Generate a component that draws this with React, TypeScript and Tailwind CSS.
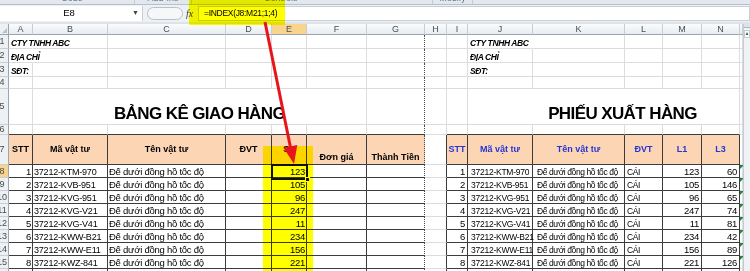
import type { ReactNode } from "react";

const items: [string, number, number][] = [
  ["37212-KTM-970", 123, 60],
  ["37212-KVB-951", 105, 146],
  ["37212-KVG-951", 96, 65],
  ["37212-KVG-V21", 247, 74],
  ["37212-KVG-V41", 11, 81],
  ["37212-KWW-B21", 234, 42],
  ["37212-KWW-E11", 156, 89],
  ["37212-KWZ-841", 221, 126],
];

const letters = ["A", "B", "C", "D", "E", "F", "G", "H", "I", "J", "K", "L", "M", "N", ""];
const NAME = "Đế dưới đồng hồ tốc độ";

// bảng trái A..G, bảng phải I..N, từ dòng 7
function inTable(r: number, c: number) {
  if (r < 7 || r > 16) return false;
  return (c >= 0 && c <= 6) || (c >= 8 && c <= 13);
}

function borders(r: number, c: number, last: number, noRight: boolean) {
  let right = "border-r-[#dadcdd]";
  if (last === 6) right = "border-r-[#4a4a4a] [border-right-style:dotted]";
  else if (noRight) right = "border-r-transparent";
  else if (inTable(r, last) || inTable(r, last + 1)) right = "border-r-[#3c3c3c]";
  const bottom = inTable(r, c) || inTable(r + 1, c) ? "border-b-[#3c3c3c]" : "border-b-[#dadcdd]";
  return `border-r border-b ${right} ${bottom}`;
}

type CellProps = {
  r: number;
  c: number;
  span?: number;
  noRight?: boolean;
  className?: string;
  children?: ReactNode;
};

const Cell = ({ r, c, span = 1, noRight = false, className = "", children }: CellProps) => (
  <div
    className={`${borders(r, c, c + span - 1, noRight)} ${span === 5 ? "col-span-5" : ""} flex min-w-0 whitespace-nowrap ${className}`}
  >
    {children}
  </div>
);

const RowHead = ({ r }: { r: number }) => (
  <div
    className={`flex items-center justify-end overflow-hidden border-r border-b border-r-[#9aa5b2] border-b-[#c9ced5] ${
      r === 8 ? "bg-[#f8d48c]" : "bg-[#eef1f4]"
    }`}
  >
    <div className="w-[12px] shrink-0 text-center text-[9px] leading-none text-[#4a4a4a]">{r}</div>
  </div>
);

const headL = "items-center justify-center text-[9px] font-bold bg-[#fcd5b4]";
const headLBottom = "items-end justify-center pb-[1px] text-[9px] leading-[11px] font-bold bg-[#fcd5b4]";
const headR = "items-center justify-center text-[9px] font-bold text-[#2336d8] bg-[#fcd5b4]";
const dataL = "items-end text-[9.5px] leading-[10px] tracking-[-0.25px]";
const code = "items-end text-[9px] leading-[10px] tracking-[-0.2px]";
const codeR = "items-end text-[8.5px] leading-[10px] tracking-[-0.25px]";
const dataR = "items-end text-[8.5px] leading-[10px] tracking-[-0.4px]";

function content(r: number, c: number): Omit<CellProps, "r" | "c"> {
  if (r >= 1 && r <= 3 && (c === 0 || c === 9)) {
    const txt = ["CTY TNHH ABC", "ĐỊA CHỈ", "SĐT:"][r - 1];
    return {
      noRight: r < 3 && (c === 0 || r === 1),
      className: "items-end pl-[2px] text-[8.5px] leading-[9px] font-bold italic tracking-[-0.4px]",
      children: txt,
    };
  }
  if (r === 7) {
    const left = ["STT", "Mã vật tư", "Tên vật tư", "ĐVT", "SL"];
    if (c <= 4) return { className: headL, children: left[c] };
    if (c === 5) return { className: headLBottom, children: "Đơn giá" };
    if (c === 6) return { className: headLBottom, children: "Thành Tiền" };
    const right = ["STT", "Mã vật tư", "Tên vật tư", "ĐVT", "L1", "L3"];
    if (c >= 8 && c <= 13) return { className: headR, children: right[c - 8] };
    return {};
  }
  if (r >= 8 && r <= 15) {
    const i = r - 8;
    const [ma, l1, l3] = items[i];
    switch (c) {
      case 0:
        return { className: `${dataL} justify-end pr-[1px]`, children: i + 1 };
      case 1:
        return { className: `${code} pl-[1px]`, children: ma };
      case 2:
        return { className: `${dataL} pl-[1px]`, children: NAME };
      case 4:
        return { className: `${dataL} justify-end pr-[1px]`, children: l1 };
      case 8:
        return { className: `${dataL} justify-end pr-[2px]`, children: i + 1 };
      case 9:
        return { className: `${codeR} pl-[3px]`, children: ma };
      case 10:
        return { className: `${dataR} pl-[4px]`, children: NAME };
      case 11:
        return { className: `${dataR} pl-[2px]`, children: "CÁI" };
      case 12:
        return { className: `${dataL} justify-end pr-[2px]`, children: l1 };
      case 13:
        return { className: `${dataL} justify-end pr-[2px]`, children: l3 };
      case 14:
        return {
          className: "items-start",
          children: <div className="h-0 w-0 border-t-[4px] border-r-[4px] border-t-[#1f8a34] border-r-transparent" />,
        };
    }
  }
  return {};
}

function rowCells(r: number): ReactNode[] {
  const out: ReactNode[] = [<RowHead key="rh" r={r} />];
  if (r === 5) {
    out.push(
      <Cell key="a" r={5} c={0} />,
      <Cell key="bf" r={5} c={1} span={5} className="items-end justify-center pb-[2px]">
        <span className="text-[17px] leading-[17px] font-bold tracking-[-0.6px]">BẢNG KÊ GIAO HÀNG</span>
      </Cell>,
      <Cell key="g" r={5} c={6} />,
      <Cell key="h" r={5} c={7} />,
      <Cell key="i" r={5} c={8} />,
      <Cell key="jn" r={5} c={9} span={5} className="items-end justify-center pl-[38px] pb-[2px]">
        <span className="text-[17px] leading-[17px] font-bold tracking-[-0.6px]">PHIẾU XUẤT HÀNG</span>
      </Cell>,
      <Cell key="o" r={5} c={14} />
    );
    return out;
  }
  for (let c = 0; c < 15; c++) out.push(<Cell key={c} r={r} c={c} {...content(r, c)} />);
  return out;
}

const Ribbon = () => (
  <div className="flex h-[5px] overflow-hidden border-b border-[#b6c0cc] bg-[#e3e8ee] text-[9px] leading-[11px] text-[#6b7684]">
    <div className="flex w-[135px] justify-center border-r border-[#c3ccd6] pl-[10px]"><span className="-mt-[7px]">Code</span></div>
    <div className="flex w-[57px] justify-center border-r border-[#c3ccd6]"><span className="-mt-[7px]">Add-Ins</span></div>
    <div className="flex w-[241px] justify-start border-r border-[#c3ccd6] pl-[72px]"><span className="-mt-[7px]">Controls</span></div>
    <div className="flex w-[40px] justify-center border-r border-[#c3ccd6]"><span className="-mt-[7px]">Modify</span></div>
    <div className="flex-1" />
  </div>
);

const FormulaBar = () => (
  <div className="flex h-[17px] items-center bg-[#edf0f4]">
    <div className="flex h-[15px] w-[143px] items-center border-r border-[#c5ced9] bg-white text-[9.5px]">
      <span className="flex-1 pl-[6px] text-center">E8</span>
      <span className="w-[10px] text-[7px] text-[#444]">▼</span>
    </div>
    <div className="ml-[4px] h-[13px] w-[36px] rounded-full border border-[#b8c0ca] bg-[#f6f7f9]" />
    <span className="ml-[3px] w-[10px] font-['Liberation_Serif',serif] text-[10px] italic text-[#444]">fx</span>
    <div className="ml-[2px] flex h-[15px] flex-1 items-center border border-[#c5ced9] bg-white pl-[5px] text-[8.5px] tracking-[-0.3px]">
      =INDEX(J8:M21;1;4)
    </div>
  </div>
);

const Sheet = () => (
  <div className="grid grid-cols-[9px_24px_75px_118px_46px_35px_60px_58px_22px_21px_65px_92px_38px_39px_38px_3px] grid-rows-[11px_14px_14px_14px_12px_36px_10px_30px_13px_13px_13px_13px_13px_13px_13px_13px_13px]">
    <div className="flex items-end justify-end border-r border-b border-r-[#9aa5b2] border-b-[#9aa5b2] bg-[#eef1f4] pr-[1px] pb-[1px]">
      <div className="h-0 w-0 border-b-[5px] border-l-[5px] border-b-[#b9c1ca] border-l-transparent" />
    </div>
    {letters.map((l, c) => (
      <div
        key={l + c}
        className={`flex items-center justify-center border-r border-b border-r-[#c9ced5] border-b-[#9aa5b2] text-[9px] leading-none text-[#45505c] ${
          c === 4 ? "bg-[#f8d48c]" : "bg-linear-to-b from-[#fafbfc] to-[#e8ecf0]"
        }`}
      >
        {l}
      </div>
    ))}
    {Array.from({ length: 16 }, (_, i) => rowCells(i + 1))}
  </div>
);

const ScrollBar = () => (
  <div className="flex w-[7px] flex-col border-l border-[#c3cbd5] bg-[#f0f2f5]">
    <div className="h-[4px] border-b border-[#aab4c0] bg-[#dde3ea]" />
    <div className="mt-[2px] flex h-[8px] items-center justify-center border border-[#c3cbd5] bg-white text-[5px] text-[#555]">
      ▲
    </div>
  </div>
);

export default function App() {
  return (
    <div className="relative h-[271px] w-[750px] overflow-hidden bg-white font-['Liberation_Sans',Arial,sans-serif] text-black">
      <Ribbon />
      <FormulaBar />
      <div className="h-[2px] bg-[#dfe3e8]" />
      <div className="flex">
        <Sheet />
        <ScrollBar />
      </div>

      {/* ô đang chọn E8 */}
      <div className="pointer-events-none absolute left-[271px] top-[164px] h-[16px] w-[37px] border-2 border-[#111]" />
      <div className="pointer-events-none absolute left-[305px] top-[177px] h-[5px] w-[5px] border border-white bg-[#111]" />

      {/* vùng tô vàng */}
      <div className="pointer-events-none absolute left-[189px] top-0 h-[25px] w-[96px] bg-[#ffff00] mix-blend-multiply" />
      <div className="pointer-events-none absolute left-[263px] top-[146px] h-[125px] w-[50px] bg-[#ffff00] mix-blend-multiply" />

      {/* mũi tên đỏ */}
      <svg className="pointer-events-none absolute left-0 top-0" width="750" height="271" viewBox="0 0 750 271">
        <line x1="265" y1="22" x2="290.6" y2="148" stroke="#e8141c" strokeWidth="3" />
        <polygon points="294,164 297.3,145 283.5,147.8" fill="#e8141c" />
      </svg>
    </div>
  );
}
